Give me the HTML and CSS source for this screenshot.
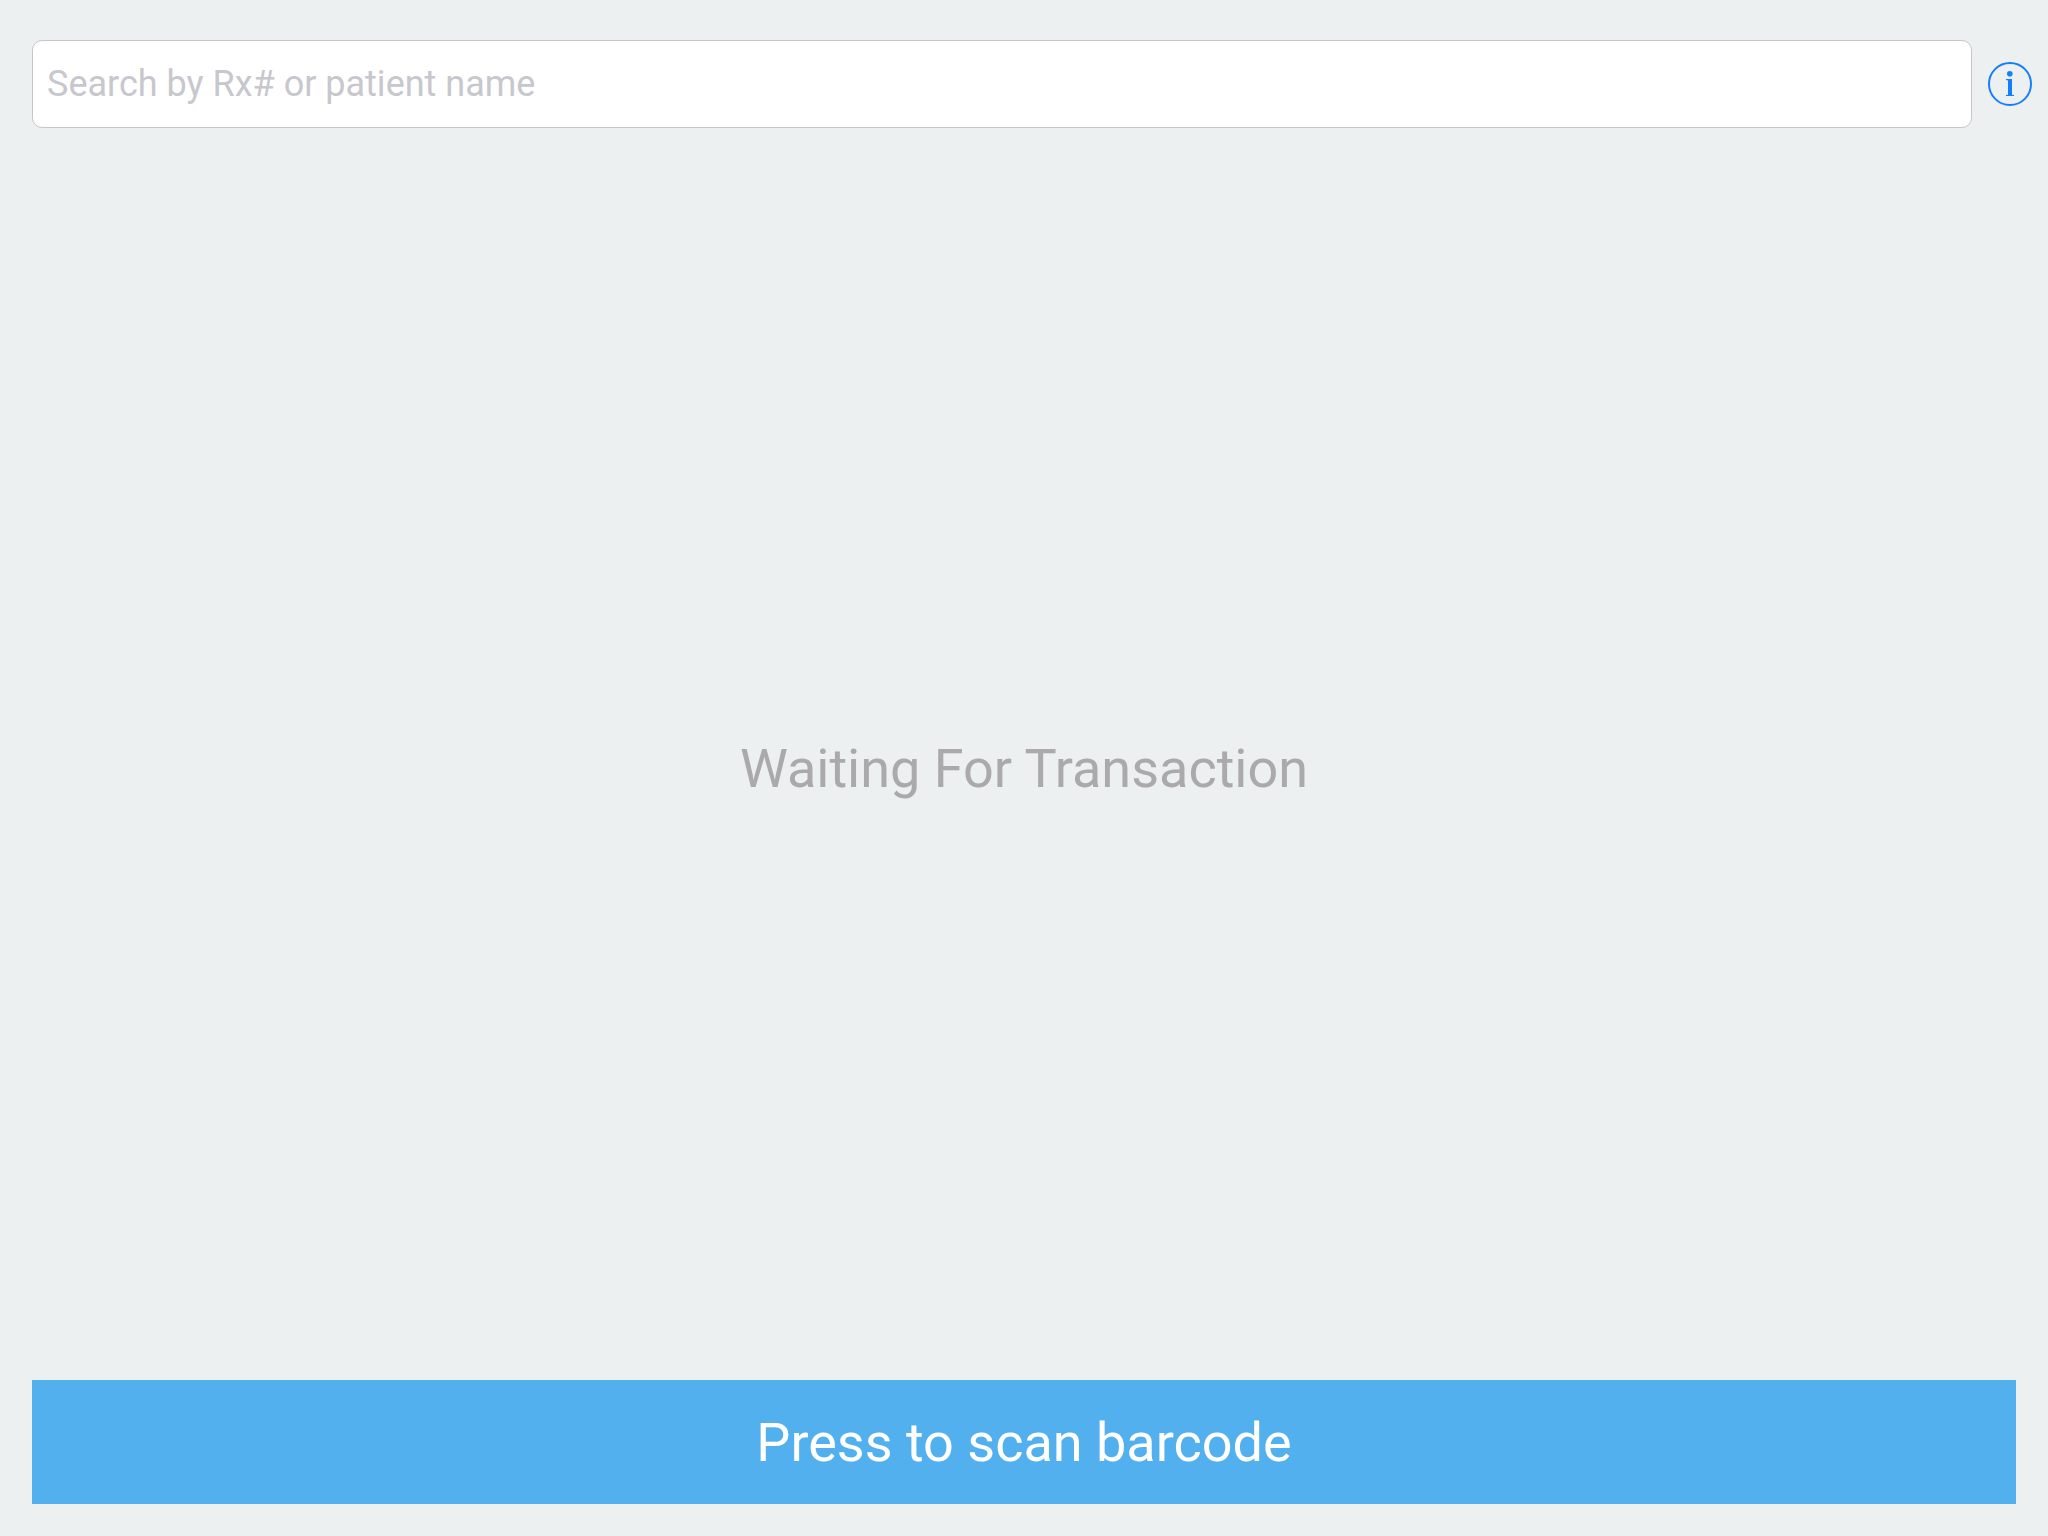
FILE: index.html
```
<!DOCTYPE html>
<html lang="en">

<head>
    <meta charset="UTF-8">
    <meta name="viewport" content="width=device-width, initial-scale=1">
    <title>Waiting For Transaction</title>
    <link rel="stylesheet" href="styles.css">
</head>

<body>
    <form class="search_bar">
        <input type="text" class="search_input" name="search" aria-label="Search" placeholder="Search by Rx# or patient name">
        <button type="button" class="btn_info" aria-label="Info">
            <svg viewBox="0 0 44 44" width="44" height="44">
                <circle cx="22" cy="22" r="21" fill="none" stroke="currentColor" stroke-width="2" />
                <circle cx="21.8" cy="11.8" r="2.8" fill="currentColor" />
                <path d="M18 17h6v15.8l2 .3v.9h-8v-.9l2-.3V18.4l-2-.4z" fill="currentColor" />
            </svg>
        </button>
    </form>

    <main class="content">
        <p class="status">Waiting For Transaction</p>
    </main>

    <div class="footer">
        <button type="button" class="btn_scan">Press to scan barcode</button>
    </div>
</body>

</html>
```

FILE: styles.css
```
* {
    box-sizing: border-box;
}

body {
    display: flex;
    flex-direction: column;
    min-height: 100vh;
    margin: 0;
    background-color: #ECF0F1;
    font-family: Roboto, "Liberation Sans", sans-serif;
}

.search_bar {
    display: flex;
    align-items: center;
    gap: 16px;
    padding: 40px 16px 0 32px;
}

.search_input {
    flex: 1;
    min-width: 0;
    height: 88px;
    padding: 0 14px;
    border: 1px solid #C4C6C8;
    border-radius: 10px;
    background-color: white;
    font-family: inherit;
    font-size: 36px;
}

.search_input::placeholder {
    color: #C7C7CD;
    opacity: 1;
}

.btn_info {
    display: flex;
    padding: 0;
    border: none;
    background: none;
    color: #157EFB;
}

.content {
    flex: 1;
    display: flex;
    align-items: center;
    justify-content: center;
    /* footer is taller than the search bar, keep the status in the middle of the page */
    padding-top: 28px;
}

.status {
    margin: 0;
    color: #AAAAAA;
    font-size: 54px;
}

.footer {
    padding: 0 32px 32px;
}

.btn_scan {
    display: block;
    width: 100%;
    height: 124px;
    border: none;
    background-color: #53B0EE;
    color: white;
    font-family: inherit;
    font-size: 54px;
}
```
